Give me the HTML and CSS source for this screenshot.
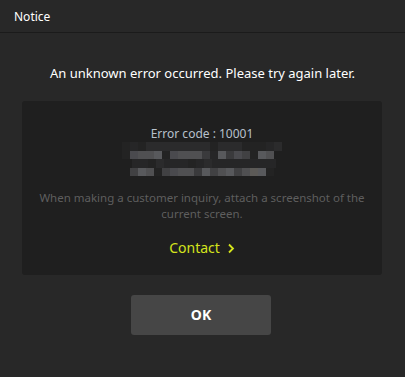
FILE: index.html
```html
<html>
<head>
  <link rel="stylesheet" href="styles.css">
</head>
<body>

<div id="dialog">

  <div class="header">Notice</div>

  <div class="message">An unknown error occurred. Please try again later.</div>

  <div class="box">
    <div class="code">Error code : 10001</div>

    <div class="mosaic">
      <div class="row r1">
        <i class="d1"></i><i class="d2"></i><i class="d1"></i><i class="d3"></i><i class="d3"></i><i class="d3"></i><i class="d3"></i><i class="d3"></i><i class="d3"></i><i class="d3"></i>
        <i class="d3"></i><i class="d1"></i><i class="d3"></i><i class="d3"></i><i class="d3"></i><i class="d1"></i><i class="d1"></i><i class="d1"></i><i class="d2"></i><i class="d3"></i>
      </div>
      <div class="row r2">
        <i class="d1"></i><i class="l3"></i><i class="l4"></i><i class="l4"></i><i class="l5"></i><i class="d1"></i><i class="l3"></i><i class="l4"></i><i class="l4"></i><i class="l4"></i>
        <i class="l1"></i><i class="d2"></i><i class="l5"></i><i class="l1"></i><i class="l3"></i><i class="l2"></i><i class="d1"></i><i class="l5"></i><i class="l4"></i>
      </div>
      <div class="row r3">
        <i class="d2"></i><i class="d2"></i><i class="d1"></i><i class="d3"></i><i class="d2"></i><i class="d2"></i><i class="d2"></i><i class="d1"></i><i class="d2"></i><i class="d3"></i>
        <i class="d2"></i><i class="d2"></i><i class="d2"></i><i class="d2"></i><i class="d2"></i><i class="d2"></i><i class="d2"></i><i class="d2"></i>
      </div>
      <div class="row r4">
        <i class="l2"></i><i class="l5"></i><i class="l4"></i><i class="d1"></i><i class="l2"></i><i class="l3"></i><i class="l4"></i><i class="l4"></i><i class="l1"></i><i class="l5"></i>
        <i class="l2"></i><i class="l4"></i><i class="l5"></i><i class="l2"></i><i class="l4"></i><i class="l6"></i><i class="l5"></i><i class="d1"></i>
      </div>
    </div>

    <div class="hint">When making a customer inquiry, attach a screenshot of the current screen.</div>

    <div class="contact">
      Contact
      <svg width="8" height="11" viewBox="0 0 8 11"><path d="M2 1.5 L6 5.5 L2 9.5" fill="none" stroke="#d4e41c" stroke-width="1.8"/></svg>
    </div>
  </div>

  <div class="actions">
    <div class="ok">OK</div>
  </div>

</div>

</body>
</html>
```

FILE: styles.css
```css
body {
  margin: 0;
  background-color: #282828;
  font-family: "Noto Sans", "Open Sans", sans-serif;
  color: #fff;
}
.header {
  height: 33px;
  line-height: 33px;
  padding-left: 14px;
  font-size: 12px;
  border-bottom: 1px solid #1b1b1b;
  box-sizing: border-box;
}
.message {
  text-align: center;
  font-size: 13px;
  margin-top: 30px;
  height: 20px;
  line-height: 20px;
}
.box {
  width: 360px;
  margin: 18px 0 0 22px;
  background-color: #1f1f1f;
  border-radius: 3px;
  padding: 25px 0 17px 0;
  text-align: center;
}
.code {
  font-size: 12px;
  line-height: 16px;
  color: #b7c0cc;
}
.mosaic {
  display: flex;
  flex-direction: column;
  align-items: center;
}
.row {
  display: flex;
  height: 8.5px;
}
.row i {
  display: block;
  width: 8px;
  height: 100%;
}
.r2 { margin-right: 8px; }
.r3 { margin-left: 8px; margin-right: 4px; }
.d1 { background: #232323; }
.d2 { background: #262627; }
.d3 { background: #2b2b2c; }
.l1 { background: #3a3a3c; }
.l2 { background: #414143; }
.l3 { background: #4a4a4e; }
.l4 { background: #505052; }
.l5 { background: #58595c; }
.l6 { background: #5c5a57; }
.hint {
  font-size: 11.5px;
  line-height: 16px;
  color: #5e5e5e;
  margin: 14px 4px 0 4px;
}
.contact {
  margin-top: 16px;
  font-size: 14px;
  line-height: 20px;
  color: #d4e41c;
  display: flex;
  justify-content: center;
  align-items: center;
  gap: 7px;
}
.actions {
  display: flex;
  justify-content: center;
  margin-top: 20px;
}
.ok {
  width: 140px;
  height: 40px;
  line-height: 40px;
  margin-left: -3px;
  background-color: #464646;
  border-radius: 3px;
  text-align: center;
  font-size: 14px;
  font-weight: bold;
}
```
